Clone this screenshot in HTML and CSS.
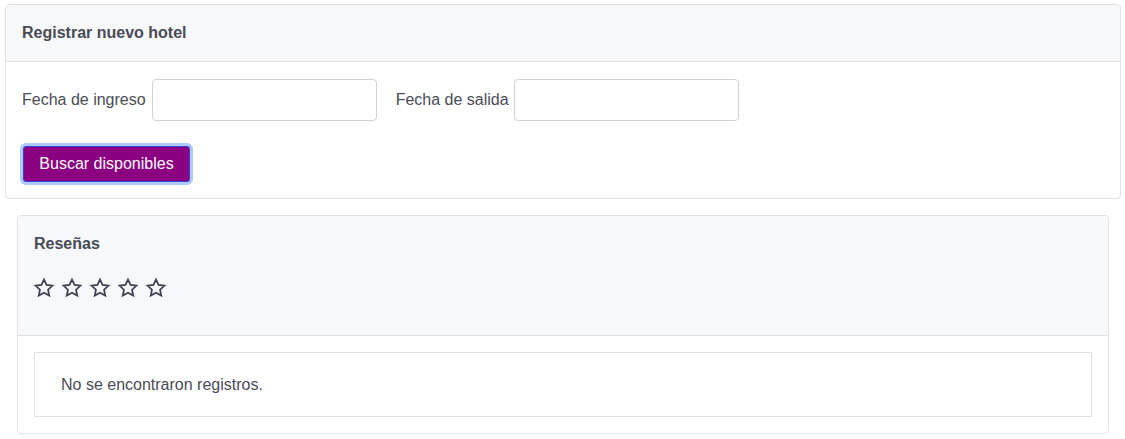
FILE: index.html
```html
<!DOCTYPE html>
<html lang="es">
<head>
<meta charset="utf-8">
<title>Registrar nuevo hotel</title>
<link rel="stylesheet" href="styles.css">
</head>
<body>
<div class="card card-main">
  <div class="card-header"><h5 class="title">Registrar nuevo hotel</h5></div>
  <div class="card-body">
    <div class="form-row">
      <label class="field"><span class="label">Fecha de ingreso</span><input class="input" type="text"></label>
      <label class="field"><span class="label">Fecha de salida</span><input class="input" type="text"></label>
    </div>
    <button class="btn">Buscar disponibles</button>
  </div>
</div>

<div class="card card-reviews">
  <div class="card-header header-reviews">
    <h5 class="title">Reseñas</h5>
    <div class="stars">
      <svg class="star" viewBox="0 0 24 24"><path d="M12 2.8l2.75 5.9 6.45.75-4.78 4.42 1.28 6.38L12 17.05l-5.7 3.2 1.28-6.38L2.8 9.45l6.45-.75z"/></svg>
      <svg class="star" viewBox="0 0 24 24"><path d="M12 2.8l2.75 5.9 6.45.75-4.78 4.42 1.28 6.38L12 17.05l-5.7 3.2 1.28-6.38L2.8 9.45l6.45-.75z"/></svg>
      <svg class="star" viewBox="0 0 24 24"><path d="M12 2.8l2.75 5.9 6.45.75-4.78 4.42 1.28 6.38L12 17.05l-5.7 3.2 1.28-6.38L2.8 9.45l6.45-.75z"/></svg>
      <svg class="star" viewBox="0 0 24 24"><path d="M12 2.8l2.75 5.9 6.45.75-4.78 4.42 1.28 6.38L12 17.05l-5.7 3.2 1.28-6.38L2.8 9.45l6.45-.75z"/></svg>
      <svg class="star" viewBox="0 0 24 24"><path d="M12 2.8l2.75 5.9 6.45.75-4.78 4.42 1.28 6.38L12 17.05l-5.7 3.2 1.28-6.38L2.8 9.45l6.45-.75z"/></svg>
    </div>
  </div>
  <div class="card-body body-reviews">
    <div class="empty">No se encontraron registros.</div>
  </div>
</div>
</body>
</html>
```

FILE: styles.css
```css
* { box-sizing: border-box; }
body {
  margin: 0;
  padding: 4px 5px 0 5px;
  font-family: "Liberation Sans", Arial, sans-serif;
  font-size: 16px;
  line-height: 24px;
  color: #495057;
  background: #fff;
}
.card {
  border: 1px solid #dfe1e5;
  border-radius: 4px;
  background: #fff;
  overflow: hidden;
}
.card-main { width: 1116px; }
.card-reviews { width: 1092px; margin: 16px 0 0 12px; }
.card-header {
  background: #f7f8fa;
  border-bottom: 1px solid #dfe1e5;
  padding: 16px 16px;
}
.title {
  margin: 0;
  font-size: 16px;
  font-weight: bold;
  line-height: 24px;
  color: #484a55;
}
.card-body { padding: 17px 16px 16px 16px; }
.form-row {
  display: flex;
  gap: 19px;
  margin-bottom: 25px;
}
.field {
  display: flex;
  align-items: center;
  gap: 6px;
}
.field + .field { gap: 5px; }
.label { color: #4a4c57; }
.input {
  width: 225px;
  height: 42px;
  border: 1px solid #ced2d9;
  border-radius: 4px;
  background: #fff;
  font: inherit;
  padding: 6px 12px;
}
.btn {
  display: block;
  margin-left: 1px;
  height: 36px;
  width: 167px;
  padding: 0 12px;
  background: #8b0080;
  color: #fff;
  font: inherit;
  font-size: 16px;
  border: 1px solid #3d3fd8;
  border-radius: 3px;
  box-shadow: 0 0 0 3px #a9cbfa;
}
.header-reviews { padding: 16px 16px 37px 16px; }
.stars {
  display: flex;
  gap: 8px;
  margin-top: 22px;
  height: 20px;
  align-items: center;
}
.star {
  width: 22px;
  height: 22px;
  margin-left: -1px;
  margin-right: -1px;
  fill: none;
  stroke: #3a4050;
  stroke-width: 1.9;
  stroke-linejoin: miter;
}
.body-reviews { padding: 16px 16px 16px 16px; }
.empty {
  border: 1px solid #dfe1e5;
  height: 65px;
  padding: 20px 26px;
  color: #4a4c57;
}
```
